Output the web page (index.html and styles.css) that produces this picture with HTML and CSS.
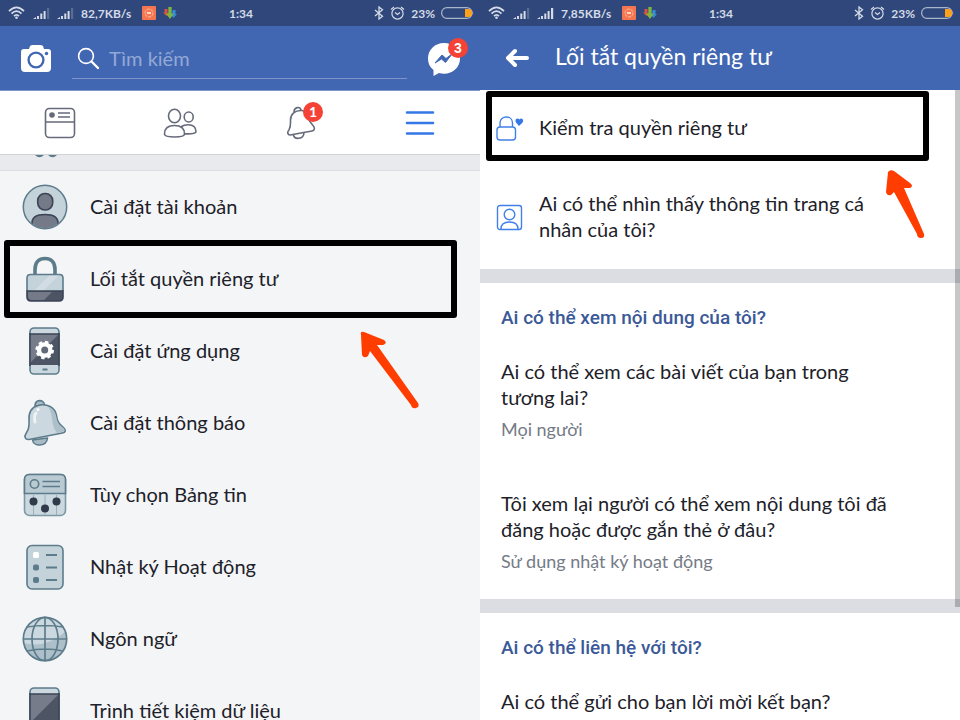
FILE: index.html
```html
<!DOCTYPE html>
<html lang="vi">
<head>
<meta charset="utf-8">
<meta name="viewport" content="width=device-width, initial-scale=1">
<title>Lối tắt quyền riêng tư</title>
<link rel="stylesheet" href="styles.css">
</head>
<body>
<svg class="defs" aria-hidden="true">
  <symbol id="wifi" viewBox="0 0 18 14"><g fill="none" stroke="currentColor" stroke-width="1.7"><path d="M1 5.2Q8.500-2.400 16 5.200M3.500 7.700Q8.500 2.700 13.500 7.700M6 10.200Q8.500 7.700 11 10.200"/></g><circle cx="8.500" cy="11.800" r="1.300" fill="currentColor"/></symbol>
  <symbol id="signal" viewBox="0 0 17 12"><path d="M0 12l3-2v2zM4 9h2v3H4zM7.300 6.500h2V12h-2zM10.600 4h2v8h-2z" fill="currentColor"/><path d="M14 1h2.200v11H14z" class="last-bar" fill="currentColor"/></symbol>
  <symbol id="recorder" viewBox="0 0 14 14"><rect width="14" height="14" rx="1" fill="#f4754f"/><circle cx="7" cy="7" r="4" fill="none" stroke="#ffc0a8" stroke-dasharray="3 1"/><path d="M5 7h4" stroke="#fff" stroke-width="1.400"/></symbol>
  <symbol id="arrows" viewBox="0 0 14 12"><path d="M1.500 2h3v4h2L3.500 9 0 5.500h1.500z" fill="#d9533f"/><path d="M9.500 3h3v4H14l-3.500 4L7.500 7h2z" fill="#2f8fdc"/><path d="M5.300 0h3.400v6.500h2.300L7 12 2.800 6.500h2.500z" fill="#7cb342"/></symbol>
  <symbol id="bluetooth" viewBox="0 0 10 14"><path d="M1 4l7.500 6.200L5 13V1l3.500 2.800L1 10" fill="none" stroke="currentColor" stroke-width="1.300"/></symbol>
  <symbol id="alarm" viewBox="0 0 15 14"><g fill="none" stroke="currentColor" stroke-width="1.200"><circle cx="7.500" cy="7.500" r="5.600"/><path d="M5 6.500l2.500 2 2.500-2M1 3.500L4 1M14 3.500L11 1"/></g></symbol>
  <symbol id="battery" viewBox="0 0 33 12"><rect x=".600" y=".600" width="30.500" height="10.800" rx="5.400" fill="none" stroke="#a9b5ca" stroke-width="1.200"/><path d="M24 2h3.500a3.500 4 0 0 1 0 8H24z" fill="#ff9f1a"/><path d="M31.500 4Q33 6 31.500 8z" fill="#a9b5ca"/></symbol>
  <symbol id="phone" viewBox="0 0 48 50"><rect x="8" y="2" width="29" height="46" rx="4" fill="#cbd8df" stroke="#5d7c8b" stroke-width="1.600"/><path d="M8 8h29v31H8z" fill="#4d5565"/><path d="M8 8h29L8 37z" fill="#767c89"/><path d="M8 8h29M8 7v33M37 7v33" stroke="#3b4456" stroke-width="1.500"/><path d="M20.500 43.500h5" stroke="#5d7c8b" stroke-width="2"/></symbol>
</svg>
<main class="screens">
  <section class="screen menu-screen">
    <div class="status">
      <div class="status-group">
        <svg class="wifi"><use href="#wifi"/></svg>
        <svg class="signal"><use href="#signal"/></svg>
        <svg class="signal"><use href="#signal"/></svg>
        <span class="speed">82,7KB/s</span>
        <svg class="square"><use href="#recorder"/></svg>
        <svg class="arrows"><use href="#arrows"/></svg>
      </div>
      <span>1:34</span>
      <div class="status-group status-end">
        <svg class="bluetooth"><use href="#bluetooth"/></svg>
        <svg class="alarm"><use href="#alarm"/></svg>
        <span>23%</span>
        <svg class="battery"><use href="#battery"/></svg>
      </div>
    </div>
    <header class="bar search-bar">
      <button class="plain" aria-label="Máy ảnh">
        <svg width="32" height="30" viewBox="0 0 32 30"><path d="M4 5h5l1-3Q11 1 13 1h7q2 0 3 1l1 3h4q3 0 3 3v16q0 4-4 4H5q-4 0-4-4V8q0-3 3-3z" fill="#fff"/><circle cx="16" cy="16" r="7.400" fill="#fff" stroke="#4267b2" stroke-width="2.400"/><circle cx="26.500" cy="9.500" r="1.700" fill="#4267b2"/></svg>
      </button>
      <label class="search">
        <svg width="24" height="24" viewBox="0 0 24 24" fill="none" stroke="#fff"><circle cx="9" cy="9" r="7.400" stroke-width="1.600"/><path d="M14.500 14.500l6.500 6.500" stroke-width="2.400" stroke-linecap="round"/></svg>
        <input type="search" placeholder="Tìm kiếm" aria-label="Tìm kiếm">
      </label>
      <button class="plain with-badge" aria-label="Tin nhắn">
        <svg width="34" height="34" viewBox="0 0 34 34"><path d="M17 1C8 1 1 7.500 1 16.500c0 5 2 9 5.500 11.500v6l5.500-3q2.500.700 5 .700c9 0 16-6.500 16-15.200S26 1 17 1z" fill="#fff"/><path d="M8 21l7-8 4 3.500 6-4.500-6.500 8.500-4-3.500z" fill="#4267b2" stroke="#4267b2"/></svg>
        <span class="badge">3</span>
      </button>
    </header>
    <nav class="tabs" aria-label="Điều hướng">
      <a href="#" aria-label="Bảng tin"><svg width="32" height="32" viewBox="0 0 32 32" fill="none" stroke="#666b7b" stroke-width="1.600"><rect x="1.500" y="1.500" width="29" height="29" rx="4"/><path d="M1.500 15h29M14 6h12M14 10h12"/><circle cx="8" cy="8" r="2.800" fill="#666b7b" stroke="none"/></svg></a>
      <a href="#" aria-label="Bạn bè"><svg width="34" height="32" viewBox="0 0 34 32" fill="none" stroke="#666b7b" stroke-width="1.600"><ellipse cx="11.500" cy="9" rx="6" ry="6.700"/><ellipse cx="25.700" cy="10" rx="4.500" ry="5"/><path d="M1.500 27c0-6 4-8.500 10-8.500s10 2.500 10 8.500c0 2-5 3-10 3s-10-1-10-3zM18.500 19.500c2-1.500 4-1.800 6.500-1.800 5 0 8 2.300 8 7 0 1.500-4 2.500-11.500 2"/></svg></a>
      <a href="#" class="with-badge" aria-label="Thông báo"><svg width="32" height="34" viewBox="-2 0 32 34" fill="none" stroke="#666b7b" stroke-width="1.600" stroke-linejoin="round"><path d="M8 6C8 1 14 0 15 4M16 4.500C9 4 4.500 8 4.500 14c0 4 .500 6-1.500 10-2 2-1.500 5 1 5l22-4c3-.500 3-3.500 1-5.500-3-3-4-5-5.500-9C20 7 18.500 5 16 4.500zM7.500 29c1 5 10 4.500 10.500-2"/></svg><span class="badge">1</span></a>
      <a href="#" aria-label="Menu"><svg width="30" height="28" viewBox="0 0 30 28" stroke="#3578e5" stroke-width="2.600" stroke-linecap="round"><path d="M2 3.500h26M2 14h26M2 24.500h26"/></svg></a>
    </nav>
    <div class="gap"><svg width="24" height="3" viewBox="0 0 24 3"><path d="M1 0q4.500 4.500 9 0zM14 0q4.500 4.500 9 0z" fill="#5d7c8b"/></svg></div>
    <ul class="menu">
      <li><a href="#"><svg viewBox="0 0 48 50"><clipPath id="face"><circle cx="23" cy="25" r="21"/></clipPath><circle cx="23" cy="25" r="21.700" fill="#c4d2da" stroke="#5d7c8b" stroke-width="1.500"/><g fill="#747a88" stroke="#3b4456" stroke-width="1.600"><rect x="15.700" y="11.500" width="15" height="16.500" rx="7.200"/><path clip-path="url(#face)" d="M10 48V41c0-6 5-8.500 13-8.500S36 35 36 41v7z"/></g></svg><span>Cài đặt tài khoản</span></a></li>
      <li class="marked"><a href="#"><svg viewBox="0 0 48 50"><path d="M13 22V15.500C13 8 17 4.500 23 4.500S33 8 33 15.500V22" fill="none" stroke="#5d7c8b" stroke-width="3.600"/><path d="M5 38V24q0-3.500 3.500-3.500h29Q41 20.500 41 24v14z" fill="#c4d2da"/><path d="M12 37l16-16h9L21 37z" fill="#d2dde3"/><path d="M5 37h36v6q0 4-4 4H9q-4 0-4-4z" fill="#4d5565"/><path d="M6 38h24l-8 8H10q-4 0-4-4z" fill="#747a88"/><path d="M5 37V24q0-3.500 3.500-3.500h29Q41 20.500 41 24v13" fill="none" stroke="#5d7c8b" stroke-width="1.600"/><path d="M5 37h36v6q0 4-4 4H9q-4 0-4-4z" fill="none" stroke="#3b4456" stroke-width="1.600"/></svg><span>Lối tắt quyền riêng tư</span></a>
        <svg class="pointer" width="62" height="80" viewBox="0 0 62 80"><path d="M3 5Q2 1 6 2l20 8q4 3-1 5l-6 0 41 58q2 4-2 5t-5-3L12 21l-2 5q-4 3-6-1z" fill="#ff3d00"/></svg></li>
      <li><a href="#"><svg viewBox="0 0 48 50"><use href="#phone"/><circle cx="22.700" cy="24" r="7.800" fill="#fff"/><circle cx="22.700" cy="24" r="8" fill="none" stroke="#fff" stroke-width="2.600" stroke-dasharray="3.400 2.880"/><circle cx="22.700" cy="24" r="3.500" fill="#626978"/></svg><span>Cài đặt ứng dụng</span></a></li>
      <li><a href="#"><svg viewBox="0 0 48 50" stroke="#5d7c8b" stroke-width="1.600" stroke-linejoin="round"><path d="M10.500 42c1 7 14 7 15-2z" fill="#a9bcc6"/><path d="M13 8c0-7 9-7 9.500-1z" fill="#a9bcc6"/><path d="M16 7.500c9-2.500 17 2 18.500 10 .700 6 2 8 7 12 3 2.500 2 5-1 5.500L7 41.500c-4 .500-5-3-3-6 3-4 3.500-7 3-13C6.500 14 10 9 16 7.500z" fill="#cbd8df"/><path d="M26 9c6 8 2 17 9 26l5-1c3-.500 3-2.500 1-4-5-4-6-7-7-12-1-5-4-8-8-9z" fill="#adc0ca" stroke="none"/><path d="M13 24c-1-5 0-8 1-9" fill="none" stroke="#eef3f5" stroke-width="3" stroke-linecap="round"/><circle cx="16" cy="11.500" r="1.500" fill="#fff" stroke="none"/></svg><span>Cài đặt thông báo</span></a></li>
      <li><a href="#"><svg viewBox="0 0 48 50"><rect x="2.500" y="4.500" width="41" height="41" rx="5" fill="#cbd8df" stroke="#7d98a5" stroke-width="1.600"/><path d="M2.500 23.500v-14q0-5 5-5h31q5 0 5 5v14z" fill="#b9cad2" stroke="#5d7c8b" stroke-width="1.600"/><path d="M11.500 25v20M23 25v20M34.500 25v20" stroke="#9cb1bc"/><g fill="none" stroke="#5d7c8b" stroke-width="1.600"><circle cx="12.500" cy="14" r="4.200"/><path d="M20.500 11.500H38M20.500 16.500H38"/></g><g fill="#303a4a"><circle cx="11.500" cy="31.500" r="4"/><circle cx="23" cy="38.500" r="4"/><circle cx="34.500" cy="31.500" r="4"/></g></svg><span>Tùy chọn Bảng tin</span></a></li>
      <li><a href="#"><svg viewBox="0 0 48 50"><rect x="5" y="3.500" width="36" height="43.500" rx="5" fill="#c4d2da" stroke="#5d7c8b" stroke-width="1.600"/><rect x="11" y="10" width="6" height="6" rx="1.500" fill="#fff"/><rect x="11" y="22.500" width="6" height="6" rx="2" fill="#5d7c8b"/><rect x="11" y="35" width="6" height="6" rx="2" fill="#5d7c8b"/><path d="M24 13h11M24 25.500h11M24 38h11" stroke="#5d7c8b" stroke-width="1.800"/></svg><span>Nhật ký Hoạt động</span></a></li>
      <li><a href="#"><svg viewBox="0 0 48 50"><circle cx="23" cy="25" r="21.700" fill="#cbd8df"/><path d="M2 29q22 6 42-12c4 16-6 30-21 30Q6 47 2 29z" fill="#adc0ca"/><g fill="none" stroke="#5d7c8b" stroke-width="1.700"><circle cx="23" cy="25" r="21.700"/><ellipse cx="23" cy="25" rx="13" ry="21.700"/><path d="M23 3v44M1 25h44M5 13q18-3 36 0M5 37q18-4 36 0"/></g></svg><span>Ngôn ngữ</span></a></li>
      <li><a href="#"><svg viewBox="0 0 48 50"><use href="#phone"/></svg><span>Trình tiết kiệm dữ liệu</span></a></li>
    </ul>
  </section>

  <section class="screen privacy-screen">
    <div class="status">
      <div class="status-group">
        <svg class="wifi"><use href="#wifi"/></svg>
        <svg class="signal"><use href="#signal"/></svg>
        <svg class="signal full"><use href="#signal"/></svg>
        <span class="speed">7,85KB/s</span>
        <svg class="square"><use href="#recorder"/></svg>
        <svg class="arrows"><use href="#arrows"/></svg>
      </div>
      <span>1:34</span>
      <div class="status-group status-end">
        <svg class="bluetooth"><use href="#bluetooth"/></svg>
        <svg class="alarm"><use href="#alarm"/></svg>
        <span>23%</span>
        <svg class="battery"><use href="#battery"/></svg>
      </div>
    </div>
    <header class="bar title-bar">
      <button class="plain" aria-label="Quay lại"><svg width="24" height="20" viewBox="0 0 24 20" fill="none" stroke="#fff" stroke-width="4" stroke-linecap="round" stroke-linejoin="round"><path d="M22 10H4M10 3L3 10l7 7" /></svg></button>
      <h1>Lối tắt quyền riêng tư</h1>
    </header>
    <div class="content">
      <div class="group quick">
        <a class="item marked" href="#">
          <svg width="28" height="26" viewBox="0 1 28 26" fill="none" stroke="#4080e8" stroke-width="1.400"><rect x="1" y="12" width="18.500" height="13" rx="3"/><path d="M4 12V8c0-8 12.500-8 12.500 0v4"/><path d="M23 11l-3-3.500C18 4 22 2 23.300 4.500 24.600 2 28.600 4 26.600 7.500z" fill="#3578e5" stroke="none"/></svg>
          <span>Kiểm tra quyền riêng tư</span>
        </a>
        <svg class="pointer" width="42" height="74" viewBox="0 0 42 74"><path d="M4 4q2-3 6-1l16 12q4 3 0 5l-6 0 20 46q1 4-3 4t-4-4L10 24l-3 3q-4 1-5-3z" fill="#ff3d00"/></svg>
        <a class="item" href="#">
          <svg width="28" height="28" viewBox="0 0 28 28" fill="none" stroke="#4080e8" stroke-width="1.400"><rect x="1.500" y="1.500" width="24" height="24" rx="2.500"/><circle cx="13.500" cy="10.500" r="5.300"/><path d="M5 25c0-5 3-7 8.500-7s8.500 2 8.500 7"/></svg>
          <span>Ai có thể nhìn thấy thông tin trang cá nhân của tôi?</span>
        </a>
      </div>
      <section class="group">
        <h2>Ai có thể xem nội dung của tôi?</h2>
        <a class="entry" href="#">Ai có thể xem các bài viết của bạn trong tương lai?<small>Mọi người</small></a>
        <a class="entry" href="#">Tôi xem lại người có thể xem nội dung tôi đã đăng hoặc được gắn thẻ ở đâu?<small>Sử dụng nhật ký hoạt động</small></a>
      </section>
      <section class="group">
        <h2>Ai có thể liên hệ với tôi?</h2>
        <a class="entry" href="#">Ai có thể gửi cho bạn lời mời kết bạn?</a>
      </section>
      <div class="scrollbar"></div>
    </div>
  </section>
</main>
</body>
</html>
```
FILE: styles.css
```css
* { box-sizing: border-box; }
body {
  margin: 0;
  background: #fff;
  color: #1d2129;
  font-family: Lato, "Noto Sans", sans-serif;
  font-size: 20px;
}
a { color: inherit; text-decoration: none; }
svg { flex: none; display: block; }
.defs { position: absolute; width: 0; height: 0; }
.screens {
  display: grid;
  grid-template-columns: 1fr 1fr;
  height: 100vh;
  overflow: hidden;
}
.screen { min-width: 0; overflow: hidden; }
.menu-screen { background: #f4f5f7; }

.status {
  display: grid;
  grid-template-columns: 1fr auto 1fr;
  align-items: center;
  height: 26px;
  padding: 0 6px 0 8px;
  background: #2f477a;
  color: #d5dbe7;
  font-size: 12px;
  font-weight: 700;
}
.status-group { display: flex; align-items: center; gap: 7px; }
.status-end { justify-content: flex-end; gap: 6px; }
.speed { width: 54px; }
.wifi { width: 18px; height: 14px; }
.signal { width: 17px; height: 12px; }
.last-bar { opacity: var(--last-bar, 0.25); }
.full { --last-bar: 1; }
.square { width: 14px; height: 14px; }
.arrows { width: 14px; height: 12px; }
.bluetooth { width: 10px; height: 14px; }
.alarm { width: 15px; height: 14px; }
.battery { width: 33px; height: 12px; }

.bar {
  display: flex;
  align-items: center;
  height: 64px;
  background: #4267b2;
  color: #fff;
}
.plain { padding: 0; border: 0; background: none; color: inherit; }
.with-badge { position: relative; }
.badge {
  position: absolute;
  top: -4px;
  right: -7px;
  width: 20px;
  height: 20px;
  border-radius: 50%;
  background: #f44336;
  color: #fff;
  font-size: 14px;
  font-weight: 700;
  line-height: 20px;
  text-align: center;
}
.search-bar { gap: 20px; padding: 2px 19px 0 20px; }
.search {
  display: flex;
  align-items: center;
  gap: 8px;
  flex: 1;
  height: 40px;
  padding-left: 5px;
  border-bottom: 1px solid #7c96cb;
}
.search input {
  flex: 1;
  min-width: 0;
  padding: 0 0 2px;
  border: 0;
  outline: 0;
  background: none;
  color: #fff;
  font: inherit;
}
.search input::placeholder { color: #93a9d5; opacity: 1; }
.title-bar { gap: 26px; padding-left: 25px; }
h1 { margin: 0; padding-bottom: 4px; font-size: 23px; font-weight: 400; }

.tabs {
  display: grid;
  grid-template-columns: repeat(4, 1fr);
  justify-items: center;
  align-items: center;
  height: 65px;
  border-top: 1px solid #7c96cb;
  border-bottom: 1px solid #d0d2d6;
  background: #fff;
}
.gap {
  height: 16px;
  padding-left: 34px;
  border-bottom: 1px solid #dcdde0;
  background: #e9eaee;
}
.menu { margin: 0; padding: 0; list-style: none; }
.menu li { position: relative; }
.menu a {
  display: flex;
  align-items: center;
  gap: 20px;
  height: 72px;
  padding-left: 22px;
}
.menu a svg { width: 48px; height: 50px; }
.menu span { padding-bottom: 2px; }
.marked { position: relative; }
.marked::after {
  content: "";
  position: absolute;
  inset: -3px 23px -3px 4px;
  border: 6px solid #000;
  border-radius: 3px;
  pointer-events: none;
}
.pointer { position: absolute; z-index: 1; }
.menu .pointer { top: 87px; right: 60px; }

.content { position: relative; }
.group + .group { border-top: 14px solid #dcdde2; }
.quick { position: relative; padding-bottom: 1px; }
.item {
  display: flex;
  align-items: center;
  gap: 15px;
  padding: 24px 55px 26px 16px;
  line-height: 26px;
}
.item svg { margin: 2px 0 -2px; }
.item.marked::after { inset: 1px 31px 5px 6px; }
.quick .pointer { top: 78px; right: 34px; }
h2 {
  margin: 0;
  padding: 23px 21px 5px;
  color: #3b5998;
  font-family: Roboto, sans-serif;
  font-size: 19px;
  font-weight: 500;
  line-height: 24px;
}
.entry {
  display: block;
  padding: 23px 55px 26px 21px;
  line-height: 26px;
}
small {
  display: block;
  margin-top: 7px;
  color: #757b86;
  font-size: 18px;
  line-height: 24px;
}
.scrollbar {
  position: absolute;
  top: 0;
  right: 0;
  width: 5px;
  height: 517px;
  background: rgb(0 0 0 / 22%);
}
```
